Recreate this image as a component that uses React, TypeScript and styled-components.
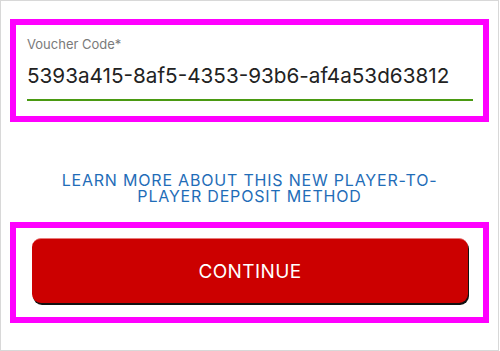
import React, { useState } from 'react';
import styled, { createGlobalStyle } from 'styled-components';

const GlobalStyle = createGlobalStyle`
	html, body {
		margin: 0;
		padding: 0;
		background: #ffffff;
	}
	body {
		font-family: Inter, "Open Sans", "Liberation Sans", sans-serif;
	}
`

const App: React.FC = () => {
	const [code, setCode] = useState('5393a415-8af5-4353-93b6-af4a53d63812')

	return (
		<Page>
			<GlobalStyle />
			<Highlight className='field_box'>
				<Label htmlFor='voucher'>Voucher Code*</Label>
				<Input id='voucher' value={code} onChange={(e) => setCode(e.target.value)} />
			</Highlight>

			<LearnMore href='#'>
				<span>LEARN MORE ABOUT THIS NEW PLAYER-TO-</span>
				<span>PLAYER DEPOSIT METHOD</span>
			</LearnMore>

			<Highlight className='button_box'>
				<ContinueButton type='button'>CONTINUE</ContinueButton>
			</Highlight>
		</Page>
	)
}

export default App

const Page = styled.div`
	box-sizing: border-box;
	width: 499px;
	height: 351px;
	border: 1px solid #d8d8d8;
	padding: 18px 9px 0 9px;
	display: flex;
	flex-direction: column;
`

const Highlight = styled.div`
	box-sizing: border-box;
	width: 479px;
	border: 6px solid #ff00ff;
	background: #fff;
	display: flex;
	flex-direction: column;

	&.field_box {
		height: 103px;
		padding: 11px 10px 0 11px;
	}

	&.button_box {
		height: 101px;
		padding: 10px 15px 0 16px;
	}
`

const Label = styled.label`
	font-size: 13px;
	line-height: 16px;
	color: #7a7a7a;
`

const Input = styled.input`
	box-sizing: border-box;
	font-family: inherit;
	font-size: 20.7px;
	line-height: 24px;
	height: 49px;
	color: #222;
	border: none;
	border-bottom: 2px solid #4a9a12;
	outline: none;
	padding: 11px 0 12px 0;
	margin: 0;
	background: transparent;
	width: 100%;
`

const LearnMore = styled.a`
	display: flex;
	flex-direction: column;
	align-items: center;
	margin: 50px 0 18px 0;
	font-size: 16px;
	line-height: 16px;
	letter-spacing: 0.8px;
	color: #1f6db8;
	text-decoration: none;
`

const ContinueButton = styled.button`
	height: 65px;
	width: 436px;
	border: none;
	border-top: 1px solid #e87a7a;
	border-radius: 9px;
	background: #cc0000;
	box-shadow: 1px 2px 0 #111;
	color: #fff;
	font-family: inherit;
	font-size: 19px;
	letter-spacing: 0.4px;
	cursor: pointer;
`
